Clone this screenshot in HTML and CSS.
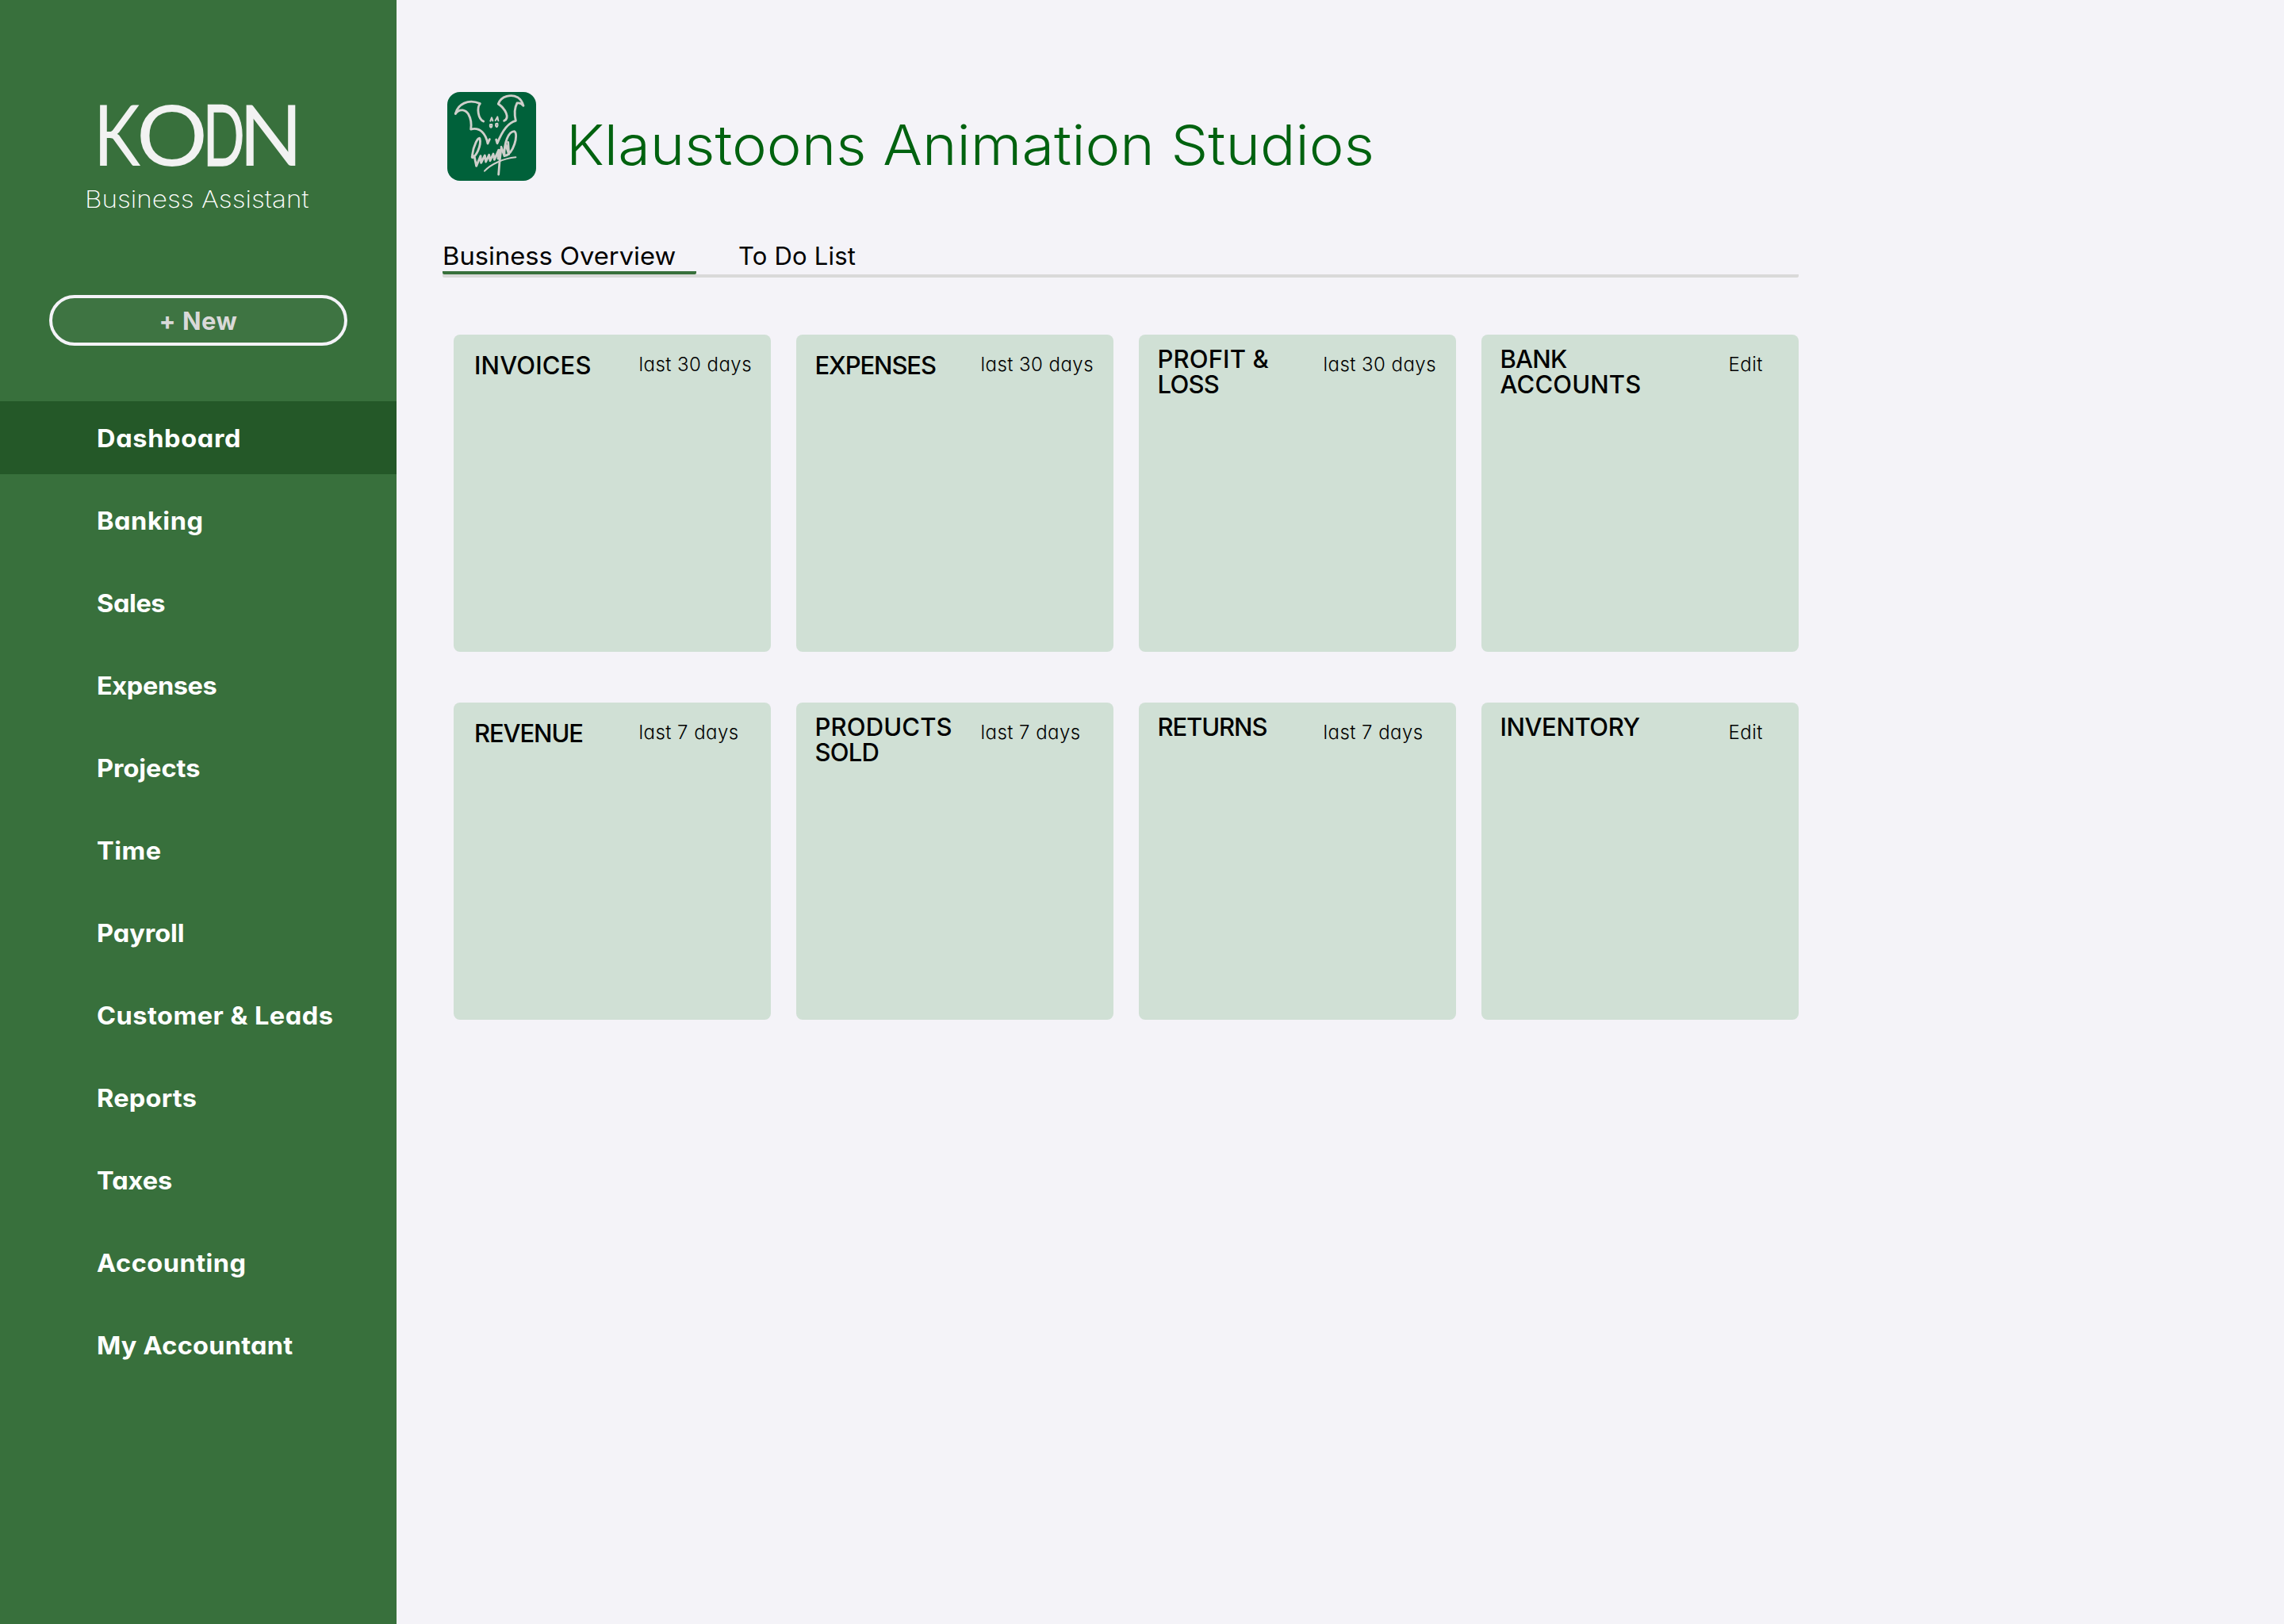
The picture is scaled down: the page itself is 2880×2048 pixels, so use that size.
FILE: index.html
```html
<!DOCTYPE html>
<html lang="en">
<head>
<meta charset="utf-8">
<title>KODN Business Assistant</title>
<link rel="stylesheet" href="styles.css">
</head>
<body>
<div class="app">
  <aside class="sidebar">
    <div class="brand">
      <div class="brand-name"><span class="letter k">K</span><span class="letter o">O</span><span class="letter d">D</span><span class="letter n">N</span></div>
      <div class="brand-sub"><span class="wide">Business Assistant</span></div>
    </div>
    <button class="new-btn" type="button">+ New</button>
    <nav class="nav">
      <a class="nav-item active"><span class="wide t20">Dashboard</span></a>
      <a class="nav-item"><span class="wide t18">Banking</span></a>
      <a class="nav-item"><span class="wide t10">Sales</span></a>
      <a class="nav-item"><span class="wide t10">Expenses</span></a>
      <a class="nav-item"><span class="wide t12">Projects</span></a>
      <a class="nav-item"><span class="wide t18">Time</span></a>
      <a class="nav-item"><span class="wide t12">Payroll</span></a>
      <a class="nav-item"><span class="wide t17">Customer &amp; Leads</span></a>
      <a class="nav-item"><span class="wide t15">Reports</span></a>
      <a class="nav-item"><span class="wide t12">Taxes</span></a>
      <a class="nav-item"><span class="wide t17">Accounting</span></a>
      <a class="nav-item"><span class="wide t15">My Accountant</span></a>
    </nav>
  </aside>
  <main class="main">
    <header class="header">
      <svg class="company-logo" viewBox="42 48 336 336" fill="none" stroke="#cfcfcb" stroke-width="8.5" stroke-linecap="round" stroke-linejoin="round">
        <path d="M73 130C82 95 120 72 166 92C153 108 158 150 179 159"/>
        <path d="M73 130C90 108 112 116 122 132C132 150 134 170 131 189C168 180 188 208 195 243L202 227"/>
        <path d="M235 93C246 62 285 56 308 68C320 76 327 88 330 100C322 90 315 88 306 90C294 112 296 135 301 157C272 163 248 200 231 242L227 228"/>
        <path d="M235 93C262 112 280 146 257 157"/>
        <path stroke-width="6" d="M205 158L210 145L214 157M224 156L232 142L235 157"/>
        <path stroke-width="6" d="M204 171Q202 181 207 182Q212 181 211 171ZM226 168Q223 179 229 180Q234 178 232 167Z"/>
        <path d="M136 294C150 296 172 250 165 224C160 216 140 250 136 290C134 300 140 298 144 290L152 328L168 290L170 316L184 288L188 312L200 286L204 308L216 282L220 304L236 268L234 300L246 262L240 310L236 360"/>
        <path d="M238 268L236 298M246 256L258 290C256 240 274 196 296 197C312 206 294 284 258 290M272 238L275 284L262 244"/>
        <path stroke-width="6" d="M183 347C206 322 252 300 301 295"/>
      </svg>
      <h1 class="title"><span class="wide">Klaustoons Animation Studios</span></h1>
    </header>
    <div class="tabs">
      <a class="tab active"><span class="wide">Business Overview</span></a>
      <a class="tab">To Do List</a>
    </div>
    <section class="cards">
      <article class="card single">
        <h2 class="card-title">INVOICES</h2>
        <span class="card-meta">last 30 days</span>
      </article>
      <article class="card">
        <h2 class="card-title single-line tight">EXPENSES</h2>
        <span class="card-meta">last 30 days</span>
      </article>
      <article class="card">
        <h2 class="card-title">PROFIT &amp;<br><span class="snug">LOSS</span></h2>
        <span class="card-meta">last 30 days</span>
      </article>
      <article class="card">
        <h2 class="card-title"><span class="snug">BANK</span><br>ACCOUNTS</h2>
        <span class="card-meta edit">Edit</span>
      </article>
      <article class="card single">
        <h2 class="card-title tight">REVENUE</h2>
        <span class="card-meta">last 7 days</span>
      </article>
      <article class="card">
        <h2 class="card-title">PRODUCTS<br><span class="snug">SOLD</span></h2>
        <span class="card-meta">last 7 days</span>
      </article>
      <article class="card">
        <h2 class="card-title tight">RETURNS</h2>
        <span class="card-meta">last 7 days</span>
      </article>
      <article class="card">
        <h2 class="card-title slim">INVENTORY</h2>
        <span class="card-meta edit">Edit</span>
      </article>
    </section>
  </main>
</div>
</body>
</html>
```
FILE: styles.css
```css
* { box-sizing: border-box; }

body {
  margin: 0;
  background: #f4f3f8;
  color: #000;
  font-family: Inter, "Liberation Sans", sans-serif;
  font-feature-settings: "cv11";
}

.app { display: flex; width: 2880px; height: 2048px; }

/* Horizontally extended lettering */
.wide { display: inline-block; transform-origin: left; white-space: nowrap; }

/* Sidebar */
.sidebar { width: 500px; flex: none; background: #38703c; color: #fff; }

.brand { height: 372px; padding-top: 105px; }
.brand-name {
  display: flex;
  padding-left: 118px;
  font: 400 106px/127px Lato, sans-serif;
  color: #f2f2f2;
}
.letter { display: block; transform-origin: left; white-space: nowrap; }
.k { width: 53.5px; transform: scaleX(.84); }
.o { width: 84.5px; transform: scaleX(1.06); }
.d { width: 45px; transform: scaleX(.65); -webkit-text-stroke: 1.5px #f2f2f2; }
.n { width: 80px; }
.brand-sub {
  padding: 1px 0 0 107px;
  font-size: 30px;
  font-weight: 230;
  line-height: 36px;
  font-feature-settings: normal;
}
.brand-sub .wide { transform: scaleX(1.11); }

.new-btn {
  display: block;
  width: 376px;
  height: 64px;
  margin: 0 0 70px 62px;
  padding: 0;
  border: 4px solid #f4f3f8;
  border-radius: 32px;
  background: #3e7442;
  color: #d9d9d9;
  font: 650 31px Inter, sans-serif;
  letter-spacing: .5px;
}

.nav { display: flex; flex-direction: column; gap: 12px; }
.nav-item {
  height: 92px;
  padding: 1px 0 0 121.5px;
  font-size: 31px;
  font-weight: 650;
  line-height: 92px;
}
.nav-item .wide { transform: scaleX(1.05); }
.nav-item.active { background: #245828; }
.t10 { letter-spacing: -.4px; }
.t12 { letter-spacing: -.05px; }
.t15 { letter-spacing: .2px; }
.t17 { letter-spacing: .45px; }
.t18 { letter-spacing: .5px; }
.t20 { letter-spacing: .6px; }

/* Main column */
.main { width: 1768px; padding: 116px 0 0 58px; }

.header { display: flex; height: 186px; padding-left: 6px; gap: 37.5px; }
.company-logo { width: 112px; height: 112px; border-radius: 16px; background: #00613a; }
.title {
  margin: 11px 0 0;
  color: #00620f;
  font-size: 70px;
  font-weight: 300;
  line-height: 112px;
  font-feature-settings: normal;
}
.title .wide { transform: scaleX(1.057); }

.tabs {
  display: flex;
  gap: 53px;
  height: 48px;
  border-bottom: 4px solid #d9d9d9;
  border-radius: 2px;
  font-size: 31px;
  line-height: 42px;
}
.tab { height: 44px; letter-spacing: .2px; }
.tab.active { width: 320px; border-bottom: 4px solid #38703c; border-radius: 2px; letter-spacing: 0; }
.tab .wide { transform: scaleX(1.055); }

.cards {
  display: grid;
  grid-template-columns: repeat(4, 400px);
  gap: 64px 32px;
  padding: 72px 0 0 14px;
}
.card {
  display: grid;
  grid-template-columns: 209px 1fr;
  height: 400px;
  padding: 15px 0 0 23.5px;
  border-radius: 8px;
  background: #d0e0d5;
}
.card.single { padding-left: 26px; }
.card.single .card-title, .single-line { padding-top: 8px; }
.card-title {
  margin: 0;
  font-size: 31px;
  font-weight: 500;
  line-height: 32px;
  letter-spacing: .15px;
}
.card-title.tight { letter-spacing: -1.1px; }
.card-title.slim { letter-spacing: -.42px; }
.snug { letter-spacing: -.75px; }
.card-meta {
  padding-top: 7px;
  font-size: 24px;
  font-weight: 300;
  line-height: 32px;
  letter-spacing: .45px;
}
.card.single .card-meta { margin-left: -1.5px; }
.card-meta.edit { padding-left: 79px; }
```
